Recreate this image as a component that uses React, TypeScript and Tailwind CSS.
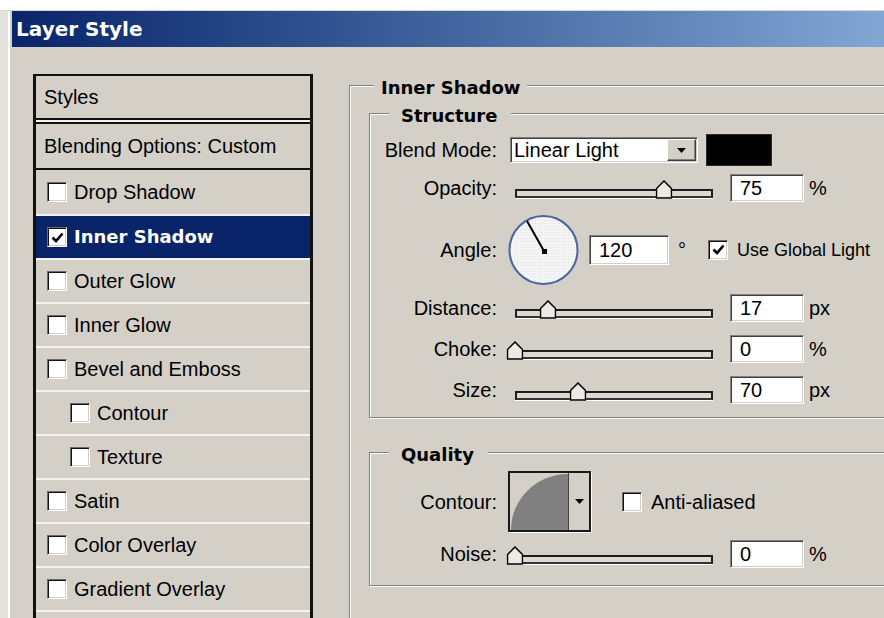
import clsx from "clsx";

const boldFace = "font-['DejaVu_Sans',Verdana,sans-serif] font-bold";
const sunken =
  "border border-t-[#808080] border-l-[#808080] border-r-white border-b-white shadow-[inset_1px_1px_0_#404040,inset_-1px_-1px_0_#d4d0c8]";
const boxEdge =
  "border border-t-[#6a6a6a] border-l-[#6a6a6a] border-r-white border-b-white shadow-[inset_1px_1px_0_#111,inset_-1px_-1px_0_#d4d0c8]";

type Effect = { name: string; on?: boolean; sub?: boolean };

const effects: Effect[] = [
  { name: "Drop Shadow" },
  { name: "Inner Shadow", on: true },
  { name: "Outer Glow" },
  { name: "Inner Glow" },
  { name: "Bevel and Emboss" },
  { name: "Contour", sub: true },
  { name: "Texture", sub: true },
  { name: "Satin" },
  { name: "Color Overlay" },
  { name: "Gradient Overlay" },
];

const CheckBox = ({ checked = false }: { checked?: boolean }) => (
  <span
    className={clsx(
      "flex h-[20px] w-[20px] shrink-0 items-center justify-center bg-white",
      boxEdge
    )}
  >
    {checked && (
      <svg width="13" height="11" viewBox="0 0 13 11">
        <path d="M1.5 5.5 L5 9 L11.5 1.5" stroke="#000" strokeWidth="2.6" fill="none" />
      </svg>
    )}
  </span>
);

const StylesList = () => (
  <div className="flex w-[280px] shrink-0 flex-col border-x-[3px] border-t-2 border-[#111]">
    <div className="flex h-[44px] items-center border-b-2 border-[#111] pl-[8px]">Styles</div>
    <div className="h-[2px] bg-[#f4f3ef]" />
    <div className="flex h-[48px] items-center border-y-2 border-[#111] pl-[8px]">
      Blending Options: Custom
    </div>
    {effects.map((fx, i) => (
      <div
        key={fx.name}
        className={clsx(
          "flex h-[44px] items-center gap-[7px]",
          i > 0 && "border-t-2 border-[#f4f3ef]",
          fx.sub ? "pl-[34px]" : "pl-[11px]",
          fx.on && "bg-[#0a246a] text-white"
        )}
      >
        <CheckBox checked={fx.on} />
        <span className={clsx(fx.on && boldFace, fx.on && "text-[18px]")}>{fx.name}</span>
      </div>
    ))}
    {/* next entry, scrolled below the fold */}
    <div className="h-[44px] border-t-2 border-[#f4f3ef]" />
  </div>
);

const GroupBox = ({
  title,
  className,
  legendClass,
  children,
}: {
  title: string;
  className?: string;
  legendClass: string;
  children: React.ReactNode;
}) => (
  <fieldset
    className={clsx(
      "border border-[#808080] shadow-[inset_1px_1px_0_#fff,1px_1px_0_#fff]",
      className
    )}
  >
    <legend
      className={clsx(
        "h-[13px] bg-[#d4d0c8] text-[18px] leading-[18px]",
        boldFace,
        legendClass
      )}
    >
      {title}
    </legend>
    {children}
  </fieldset>
);

const Row = ({
  label,
  className,
  children,
}: {
  label: string;
  className?: string;
  children: React.ReactNode;
}) => (
  <div className={clsx("flex items-center", className)}>
    <span className="w-[127px] shrink-0 text-right">{label}</span>
    {children}
  </div>
);

// value is 0..100, position of the thumb along the track
const Slider = ({ value }: { value: number }) => (
  <div className="ml-[10px] h-[32px] w-[214px] shrink-0 px-[8px] pt-[17px]">
    <div className="relative h-[9px]">
      <div className="h-[9px] border-2 border-[#1c1c1c] border-b-[#333] bg-[#dcd9d2] shadow-[0_1px_0_#fff]" />
      <svg
        className="absolute bottom-[-1px] -translate-x-1/2"
        style={{ left: `${value}%` }}
        width="17"
        height="19"
        viewBox="0 0 17 19"
      >
        <path d="M1 18 V8.5 L8.5 1 L16 8.5 V18 Z" fill="#eceae5" stroke="#000" strokeWidth="1.5" />
      </svg>
    </div>
  </div>
);

const NumField = ({ value, className }: { value: string; className?: string }) => (
  <div
    className={clsx("flex h-[28px] shrink-0 items-center bg-white pl-[9px]", sunken, className)}
  >
    {value}
  </div>
);

const AngleDial = () => (
  <svg className="ml-[11px] shrink-0" width="71" height="72" viewBox="0 0 71 72">
    <defs>
      <pattern id="dialDots" width="3" height="3" patternUnits="userSpaceOnUse">
        <rect width="3" height="3" fill="#f4f4f4" />
        <rect width="1" height="1" fill="#e2e2e2" />
      </pattern>
    </defs>
    <circle cx="35.5" cy="36" r="34" fill="url(#dialDots)" stroke="#4b64a0" strokeWidth="2" />
    <line x1="36" y1="37" x2="19" y2="7" stroke="#000" strokeWidth="2" />
    <rect x="34" y="35" width="5" height="5" fill="#000" />
  </svg>
);

const ContourPicker = () => (
  <div className="ml-[11px] flex h-[61px] w-[83px] shrink-0 border-2 border-[#1a1a1a] bg-[#d4d0c8] shadow-[1px_1px_0_#fff]">
    <svg className="flex-1" width="58" height="57" viewBox="0 0 58 57" preserveAspectRatio="none">
      <path d="M1 57 A57 56 0 0 1 58 1 L58 57 Z" fill="#808080" />
    </svg>
    <div className="flex w-[21px] items-center justify-center border-l border-[#444]">
      <svg width="9" height="5" viewBox="0 0 9 5">
        <path d="M0 0 H9 L4.5 5 Z" fill="#000" />
      </svg>
    </div>
  </div>
);

export default function App() {
  return (
    <div className="flex h-[618px] w-[884px] flex-col overflow-hidden bg-white text-[20px] leading-none text-black font-['Liberation_Sans',Arial,sans-serif]">
      <div className="h-[11px] shrink-0 border-b border-[#d8d6d0] bg-white" />
      <div className="flex min-h-0 flex-1 bg-[#e4e2dc] pl-[8px]">
        <div className="flex w-[1100px] shrink-0 flex-col border-l-2 border-white bg-[#d4d0c8] pl-[2px]">
          {/* title bar */}
          <div
            className={clsx(
              "flex h-[36px] shrink-0 items-center bg-linear-to-r from-[#0a246a] to-[#a6caf0] pl-[4px] text-[20px] text-white",
              boldFace
            )}
          >
            Layer Style
          </div>

          <div className="flex items-start pl-[21px] pt-[27px]">
            <StylesList />

            <div className="ml-[36px] w-[700px] shrink-0 pt-[5px]">
              <GroupBox title="Inner Shadow" legendClass="ml-[24px] px-[7px]" className="h-[560px]">
                <GroupBox
                  title="Structure"
                  legendClass="ml-[19px] pl-[12px] pr-[14px]"
                  className="ml-[19px] mr-[20px] mt-[15px] pb-[11px] pt-[14px]"
                >
                  <Row label="Blend Mode:" className="h-[32px]">
                    <div className={clsx("ml-[13px] flex h-[26px] w-[188px] shrink-0 items-center bg-white", sunken)}>
                      <span className="flex-1 pl-[3px]">Linear Light</span>
                      <span className="mr-[1px] flex h-[22px] w-[29px] items-center justify-center border border-t-white border-l-white border-r-[#404040] border-b-[#404040] bg-[#d4d0c8] shadow-[inset_-1px_-1px_0_#808080]">
                        <svg width="9" height="5" viewBox="0 0 9 5">
                          <path d="M0 0 H9 L4.5 5 Z" fill="#000" />
                        </svg>
                      </span>
                    </div>
                    <div className="ml-[8px] h-[32px] w-[66px] shrink-0 border border-[#2a2a2a] bg-black" />
                  </Row>

                  <Row label="Opacity:" className="mt-[6px] h-[32px]">
                    <Slider value={75} />
                    <NumField value="75" className="ml-[9px] w-[74px]" />
                    <span className="ml-[5px]">%</span>
                  </Row>

                  <Row label="Angle:" className="mt-[9px] h-[73px]">
                    <AngleDial />
                    <NumField value="120" className="ml-[10px] h-[30px] w-[80px]" />
                    <span className="ml-[9px]">°</span>
                    <span className="ml-[22px]">
                      <CheckBox checked />
                    </span>
                    <span className="ml-[9px] whitespace-nowrap text-[18px]">Use Global Light</span>
                  </Row>

                  <Row label="Distance:" className="mt-[6px] h-[32px]">
                    <Slider value={16.7} />
                    <NumField value="17" className="ml-[9px] w-[74px]" />
                    <span className="ml-[5px]">px</span>
                  </Row>

                  <Row label="Choke:" className="mt-[9px] h-[32px]">
                    <Slider value={0} />
                    <NumField value="0" className="ml-[9px] w-[74px]" />
                    <span className="ml-[5px]">%</span>
                  </Row>

                  <Row label="Size:" className="mt-[9px] h-[32px]">
                    <Slider value={31.8} />
                    <NumField value="70" className="ml-[9px] w-[74px]" />
                    <span className="ml-[5px]">px</span>
                  </Row>
                </GroupBox>

                <GroupBox
                  title="Quality"
                  legendClass="ml-[19px] pl-[12px] pr-[14px]"
                  className="ml-[19px] mr-[20px] mt-[28px] pb-[15px]"
                >
                  <Row label="Contour:" className="mt-[12px] h-[61px]">
                    <ContourPicker />
                    <span className="ml-[31px]">
                      <CheckBox />
                    </span>
                    <span className="ml-[9px]">Anti-aliased</span>
                  </Row>

                  <Row label="Noise:" className="mt-[6px] h-[32px]">
                    <Slider value={0} />
                    <NumField value="0" className="ml-[9px] w-[74px]" />
                    <span className="ml-[5px]">%</span>
                  </Row>
                </GroupBox>
              </GroupBox>
            </div>
          </div>
        </div>
      </div>
    </div>
  );
}
